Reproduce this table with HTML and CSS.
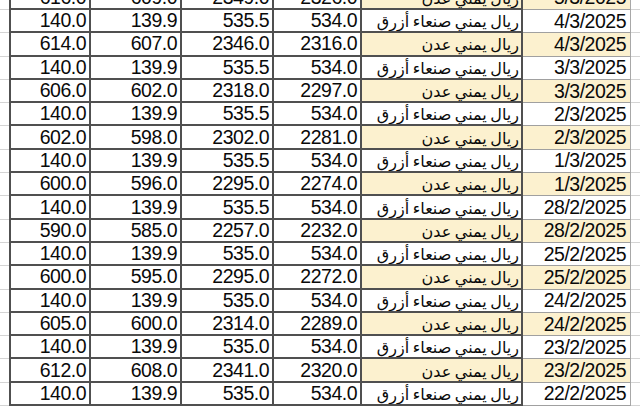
FILE: index.html
```html
<!DOCTYPE html>
<html lang="ar">
<head>
<meta charset="utf-8">
<link rel="stylesheet" href="styles.css">
</head>
<body>
<div class="sheet">
  <div class="row aden"><div class="gut"></div><div class="c num">616.0</div><div class="c num">609.0</div><div class="c num">2349.0</div><div class="c num">2326.0</div><div class="c ar" dir="rtl">ريال يمني عدن</div><div class="c date">5/3/2025</div><div class="gut2"></div></div>
  <div class="row"><div class="gut"></div><div class="c num">140.0</div><div class="c num">139.9</div><div class="c num">535.5</div><div class="c num">534.0</div><div class="c ar" dir="rtl">ريال يمني صنعاء أزرق</div><div class="c date">4/3/2025</div><div class="gut2"></div></div>
  <div class="row aden"><div class="gut"></div><div class="c num">614.0</div><div class="c num">607.0</div><div class="c num">2346.0</div><div class="c num">2316.0</div><div class="c ar" dir="rtl">ريال يمني عدن</div><div class="c date">4/3/2025</div><div class="gut2"></div></div>
  <div class="row"><div class="gut"></div><div class="c num">140.0</div><div class="c num">139.9</div><div class="c num">535.5</div><div class="c num">534.0</div><div class="c ar" dir="rtl">ريال يمني صنعاء أزرق</div><div class="c date">3/3/2025</div><div class="gut2"></div></div>
  <div class="row aden"><div class="gut"></div><div class="c num">606.0</div><div class="c num">602.0</div><div class="c num">2318.0</div><div class="c num">2297.0</div><div class="c ar" dir="rtl">ريال يمني عدن</div><div class="c date">3/3/2025</div><div class="gut2"></div></div>
  <div class="row"><div class="gut"></div><div class="c num">140.0</div><div class="c num">139.9</div><div class="c num">535.5</div><div class="c num">534.0</div><div class="c ar" dir="rtl">ريال يمني صنعاء أزرق</div><div class="c date">2/3/2025</div><div class="gut2"></div></div>
  <div class="row aden"><div class="gut"></div><div class="c num">602.0</div><div class="c num">598.0</div><div class="c num">2302.0</div><div class="c num">2281.0</div><div class="c ar" dir="rtl">ريال يمني عدن</div><div class="c date">2/3/2025</div><div class="gut2"></div></div>
  <div class="row"><div class="gut"></div><div class="c num">140.0</div><div class="c num">139.9</div><div class="c num">535.5</div><div class="c num">534.0</div><div class="c ar" dir="rtl">ريال يمني صنعاء أزرق</div><div class="c date">1/3/2025</div><div class="gut2"></div></div>
  <div class="row aden"><div class="gut"></div><div class="c num">600.0</div><div class="c num">596.0</div><div class="c num">2295.0</div><div class="c num">2274.0</div><div class="c ar" dir="rtl">ريال يمني عدن</div><div class="c date">1/3/2025</div><div class="gut2"></div></div>
  <div class="row"><div class="gut"></div><div class="c num">140.0</div><div class="c num">139.9</div><div class="c num">535.5</div><div class="c num">534.0</div><div class="c ar" dir="rtl">ريال يمني صنعاء أزرق</div><div class="c date">28/2/2025</div><div class="gut2"></div></div>
  <div class="row aden"><div class="gut"></div><div class="c num">590.0</div><div class="c num">585.0</div><div class="c num">2257.0</div><div class="c num">2232.0</div><div class="c ar" dir="rtl">ريال يمني عدن</div><div class="c date">28/2/2025</div><div class="gut2"></div></div>
  <div class="row"><div class="gut"></div><div class="c num">140.0</div><div class="c num">139.9</div><div class="c num">535.0</div><div class="c num">534.0</div><div class="c ar" dir="rtl">ريال يمني صنعاء أزرق</div><div class="c date">25/2/2025</div><div class="gut2"></div></div>
  <div class="row aden"><div class="gut"></div><div class="c num">600.0</div><div class="c num">595.0</div><div class="c num">2295.0</div><div class="c num">2272.0</div><div class="c ar" dir="rtl">ريال يمني عدن</div><div class="c date">25/2/2025</div><div class="gut2"></div></div>
  <div class="row"><div class="gut"></div><div class="c num">140.0</div><div class="c num">139.9</div><div class="c num">535.0</div><div class="c num">534.0</div><div class="c ar" dir="rtl">ريال يمني صنعاء أزرق</div><div class="c date">24/2/2025</div><div class="gut2"></div></div>
  <div class="row aden"><div class="gut"></div><div class="c num">605.0</div><div class="c num">600.0</div><div class="c num">2314.0</div><div class="c num">2289.0</div><div class="c ar" dir="rtl">ريال يمني عدن</div><div class="c date">24/2/2025</div><div class="gut2"></div></div>
  <div class="row"><div class="gut"></div><div class="c num">140.0</div><div class="c num">139.9</div><div class="c num">535.0</div><div class="c num">534.0</div><div class="c ar" dir="rtl">ريال يمني صنعاء أزرق</div><div class="c date">23/2/2025</div><div class="gut2"></div></div>
  <div class="row aden"><div class="gut"></div><div class="c num">612.0</div><div class="c num">608.0</div><div class="c num">2341.0</div><div class="c num">2320.0</div><div class="c ar" dir="rtl">ريال يمني عدن</div><div class="c date">23/2/2025</div><div class="gut2"></div></div>
  <div class="row"><div class="gut"></div><div class="c num">140.0</div><div class="c num">139.9</div><div class="c num">535.0</div><div class="c num">534.0</div><div class="c ar" dir="rtl">ريال يمني صنعاء أزرق</div><div class="c date">22/2/2025</div><div class="gut2"></div></div>
</div>
</body>
</html>
```

FILE: styles.css
```css
html, body {
  margin: 0;
  padding: 0;
  background: #ffffff;
  overflow: hidden;
}
.sheet {
  margin-top: -13.3px;
  font-family: "Liberation Sans", Arial, "DejaVu Sans", sans-serif;
  color: #0a0a0a;
}
.row {
  display: grid;
  grid-template-columns: 9px 82px 91px 92px 88px 161px 108px 1fr;
  height: 23.3px;
}
.row > div {
  box-sizing: border-box;
  height: 23.3px;
}
.gut, .gut2 {
  border-bottom: 1px solid #d4d4d4;
}
.c {
  border-bottom: 2px solid #505050;
  border-right: 2px solid #505050;
  display: flex;
  align-items: center;
  justify-content: flex-end;
  padding-right: 3px;
  white-space: nowrap;
  overflow: hidden;
}
.c:nth-child(2) {
  border-left: 2px solid #505050;
}
.num, .date {
  font-size: 19.5px;
  letter-spacing: -0.5px;
}
.ar {
  font-family: "DejaVu Sans", sans-serif;
  font-size: 16px;
  word-spacing: -1.5px;
  justify-content: flex-start;
  padding-right: 2px;
  padding-top: 2px;
}
.date {
  border-right: 1px solid #a8a8a8;
  border-bottom: 1px solid #a0a0a0;
  padding-right: 4px;
}
.aden .ar, .aden .date {
  background: #fcf1cf;
}
```
